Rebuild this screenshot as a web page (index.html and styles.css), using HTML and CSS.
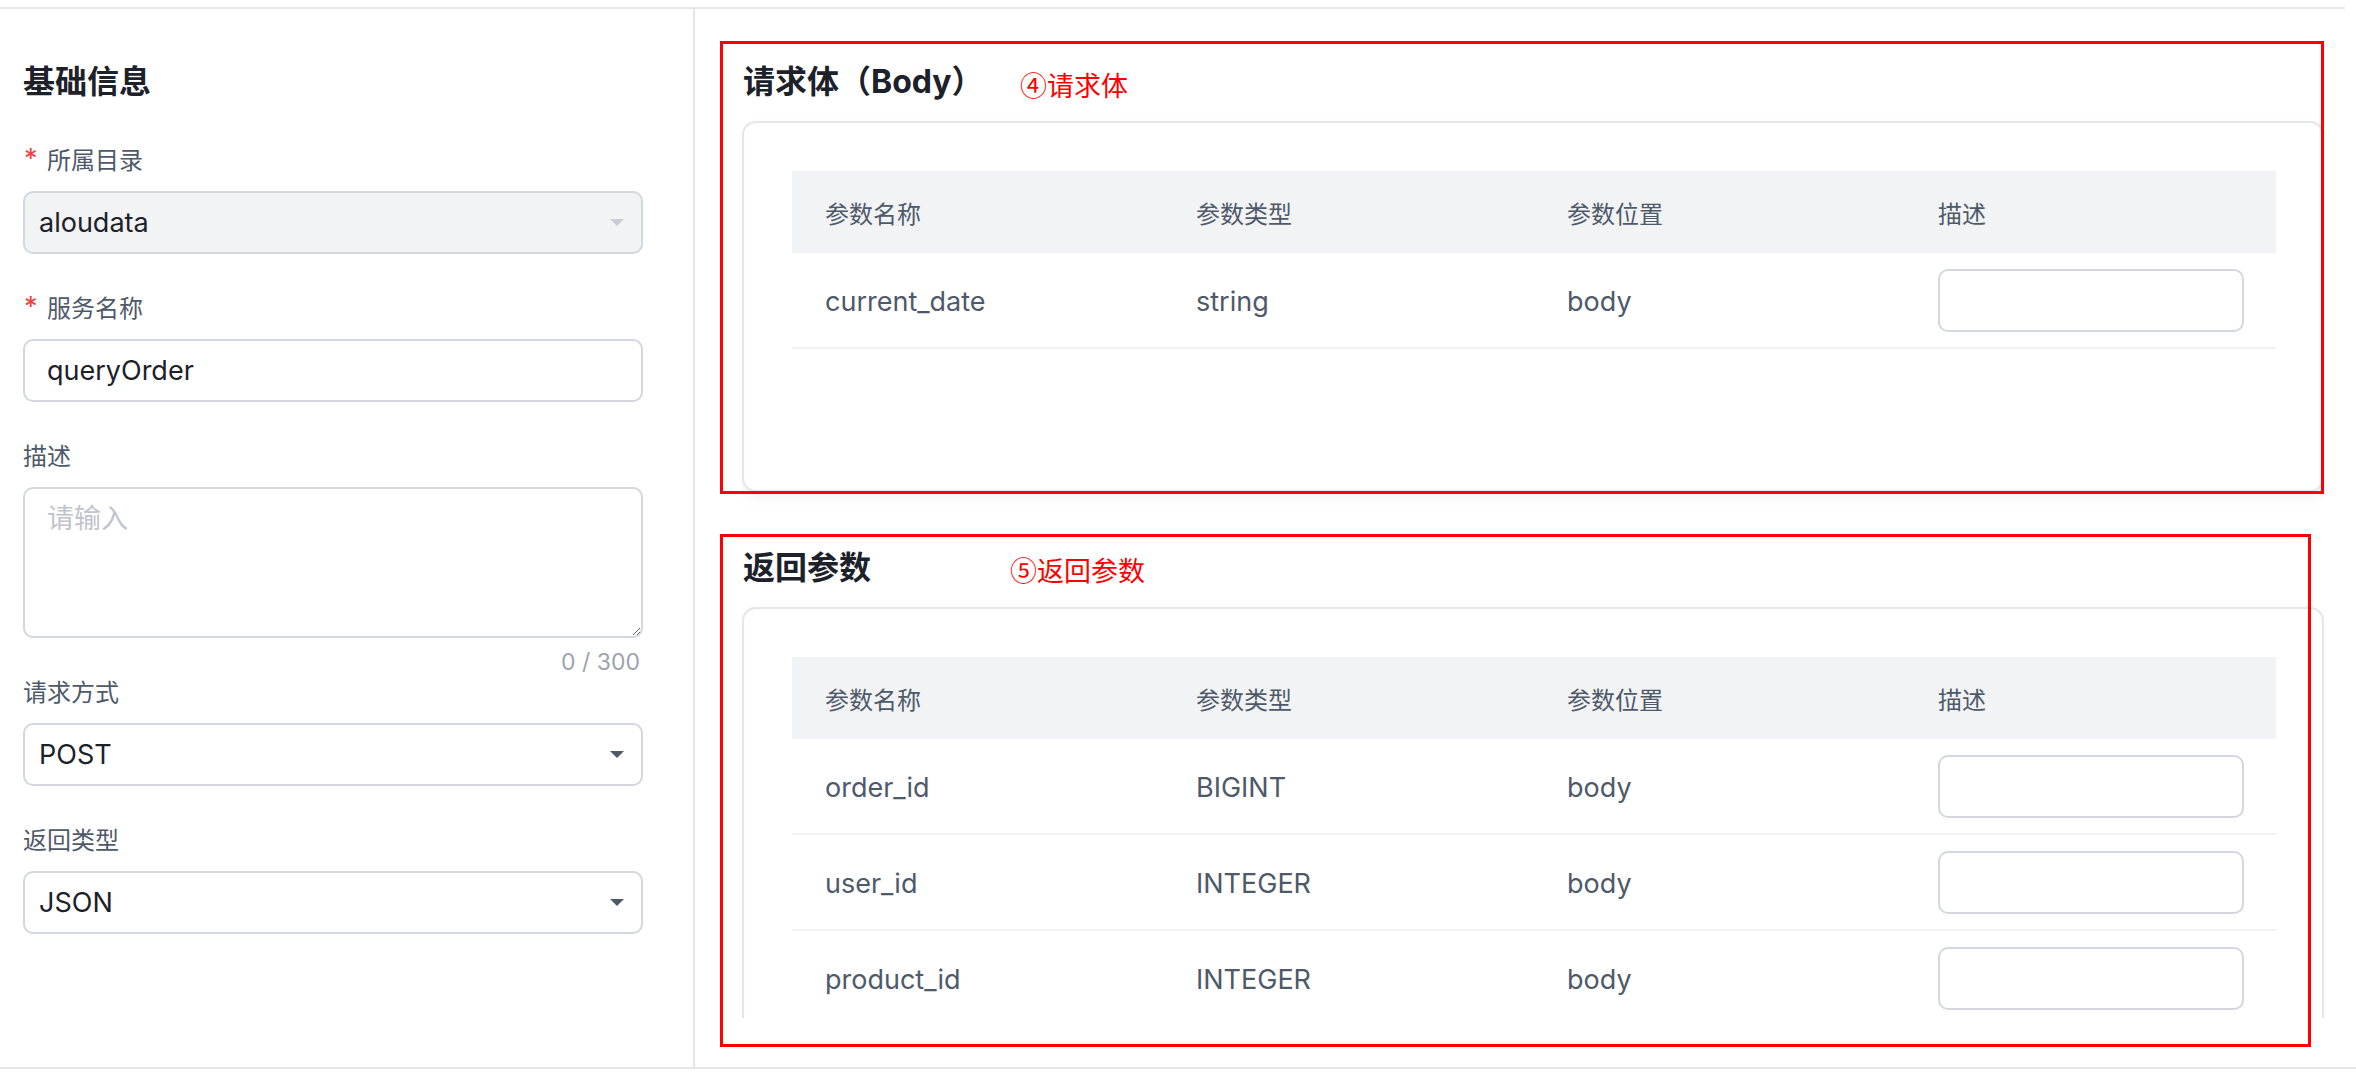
FILE: index.html
```html
<!DOCTYPE html>
<html lang="zh-CN">
<head>
<meta charset="utf-8">
<title>API</title>
<link rel="stylesheet" href="styles.css">
</head>
<body>
<div class="topbar"></div>
<div class="main">
  <aside class="left">
    <h2 class="panel-title">基础信息</h2>

    <div class="item">
      <div class="label"><span class="req">*</span>所属目录</div>
      <div class="select disabled"><span>aloudata</span><i class="caret"></i></div>
    </div>

    <div class="item">
      <div class="label"><span class="req">*</span>服务名称</div>
      <div class="input"><span>queryOrder</span></div>
    </div>

    <div class="item tight">
      <div class="label">描述</div>
      <textarea class="textarea" placeholder="请输入"></textarea>
      <div class="count">0 / 300</div>
    </div>

    <div class="item">
      <div class="label">请求方式</div>
      <div class="select"><span>POST</span><i class="caret"></i></div>
    </div>

    <div class="item">
      <div class="label">返回类型</div>
      <div class="select"><span>JSON</span><i class="caret"></i></div>
    </div>
  </aside>

  <section class="right">
    <div class="scroll">
      <h3 class="sec-title">请求体（Body）</h3>
      <div class="card card-body">
        <div class="trow thead">
          <div class="cell">参数名称</div>
          <div class="cell">参数类型</div>
          <div class="cell">参数位置</div>
          <div class="cell">描述</div>
        </div>
        <div class="trow">
          <div class="cell text">current_date</div>
          <div class="cell text">string</div>
          <div class="cell text">body</div>
          <div class="cell"><div class="desc-input"></div></div>
        </div>
      </div>

      <h3 class="sec-title second">返回参数</h3>
      <div class="card">
        <div class="trow thead">
          <div class="cell">参数名称</div>
          <div class="cell">参数类型</div>
          <div class="cell">参数位置</div>
          <div class="cell">描述</div>
        </div>
        <div class="trow">
          <div class="cell text">order_id</div>
          <div class="cell text">BIGINT</div>
          <div class="cell text">body</div>
          <div class="cell"><div class="desc-input"></div></div>
        </div>
        <div class="trow">
          <div class="cell text">user_id</div>
          <div class="cell text">INTEGER</div>
          <div class="cell text">body</div>
          <div class="cell"><div class="desc-input"></div></div>
        </div>
        <div class="trow">
          <div class="cell text">product_id</div>
          <div class="cell text">INTEGER</div>
          <div class="cell text">body</div>
          <div class="cell"><div class="desc-input"></div></div>
        </div>
      </div>
    </div>
  </section>
</div>

<div class="mark mark-body"></div>
<div class="note note-body">④请求体</div>
<div class="mark mark-resp"></div>
<div class="note note-resp">⑤返回参数</div>
</body>
</html>
```
FILE: styles.css
```css
* { box-sizing: border-box; }

html, body {
  margin: 0;
  padding: 0;
}

body {
  width: 2356px;
  height: 1074px;
  overflow: hidden;
  background: #ffffff;
  font-family: Inter, "Noto Sans CJK SC", sans-serif;
  color: #1d2129;
  position: relative;
}

.topbar {
  height: 9px;
  margin-right: 11px;
  border-bottom: 2px solid #e5e6eb;
}

.main {
  display: flex;
  height: 1060px;
  border-bottom: 2px solid #e5e6eb;
}

/* ---------- left panel ---------- */
.left {
  width: 695px;
  flex: none;
  border-right: 2px solid #e5e6eb;
  padding: 49px 50px 0 23px;
}

.panel-title {
  margin: 0 0 37px;
  font-size: 32px;
  line-height: 48px;
  font-weight: 700;
  color: #1d2129;
}

.item { margin-bottom: 37px; }
.item.tight { margin-bottom: 0; }

.label {
  font-size: 24px;
  line-height: 36px;
  height: 36px;
  margin-bottom: 12px;
  color: #4e5969;
  display: flex;
  align-items: center;
}

.req {
  display: inline-block;
  width: 24px;
  color: #f53f3f;
  font-size: 27px;
  line-height: 36px;
  position: relative;
  top: -2px;
  padding-left: 1px;
}

.select, .input {
  height: 63px;
  border: 2px solid #d4d7de;
  border-radius: 10px;
  background: #ffffff;
  display: flex;
  align-items: center;
  justify-content: space-between;
  font-size: 27px;
  color: #1d2129;
}

.select { padding: 0 17px 0 14px; }
.input { padding: 0 22px; }

.select.disabled {
  background: #f2f3f5;
}

.caret {
  width: 0;
  height: 0;
  border-left: 7px solid transparent;
  border-right: 7px solid transparent;
  border-top: 7px solid #4e5969;
}

.select.disabled .caret { border-top-color: #c9cdd4; }

.textarea {
  display: block;
  width: 100%;
  height: 151px;
  border: 2px solid #d4d7de;
  border-radius: 10px;
  padding: 12px 22px;
  font-family: Inter, "Noto Sans CJK SC", sans-serif;
  font-size: 27px;
  line-height: 36px;
  color: #1d2129;
  resize: vertical;
  outline: none;
  margin: 0;
}

.textarea::placeholder { color: #c0c4cc; }

.count {
  height: 37px;
  padding-top: 12px;
  padding-right: 3px;
  text-align: right;
  font-size: 23px;
  line-height: 25px;
  color: #9ca3af;
}

/* ---------- right panel ---------- */
.right {
  flex: 1;
  padding: 0 32px 0 47px;
}

.scroll {
  height: 1009px;
  overflow: hidden;
  padding-top: 49px;
}

.sec-title {
  margin: 0 0 15px 1px;
  font-size: 32px;
  line-height: 48px;
  height: 48px;
  font-weight: 700;
  color: #1d2129;
}

.sec-title.second { margin-top: 52px; }

.card {
  border: 2px solid #e5e6eb;
  border-radius: 14px;
  padding: 48px 46px 48px 48px;
  background: #ffffff;
  box-shadow: 0 6px 16px rgba(0, 0, 0, 0.05);
}

.card-body { height: 371px; }

.trow {
  display: grid;
  grid-template-columns: repeat(4, 1fr);
  height: 96px;
  border-bottom: 2px solid #f0f1f3;
  align-items: center;
  font-size: 27px;
  color: #4e5969;
}

.trow .text { padding-top: 2px; }

.thead {
  height: 82px;
  background: #f2f3f5;
  border-bottom: none;
  font-size: 24px;
}

.cell { padding-left: 33px; }

.desc-input {
  width: 306px;
  height: 63px;
  border: 2px solid #d4d7de;
  border-radius: 10px;
  background: #ffffff;
}

/* ---------- annotation overlays ---------- */
.mark {
  position: absolute;
  border: 3px solid #ff0000;
  pointer-events: none;
}

.mark-body {
  left: 720px;
  top: 41px;
  width: 1604px;
  height: 453px;
}

.mark-resp {
  left: 720px;
  top: 534px;
  width: 1591px;
  height: 513px;
}

.note {
  position: absolute;
  color: #ff0000;
  font-size: 27px;
  line-height: 36px;
  font-family: "Noto Sans CJK SC", sans-serif;
}

.note-body { left: 1020px; top: 67px; }
.note-resp { left: 1010px; top: 552px; }
```
